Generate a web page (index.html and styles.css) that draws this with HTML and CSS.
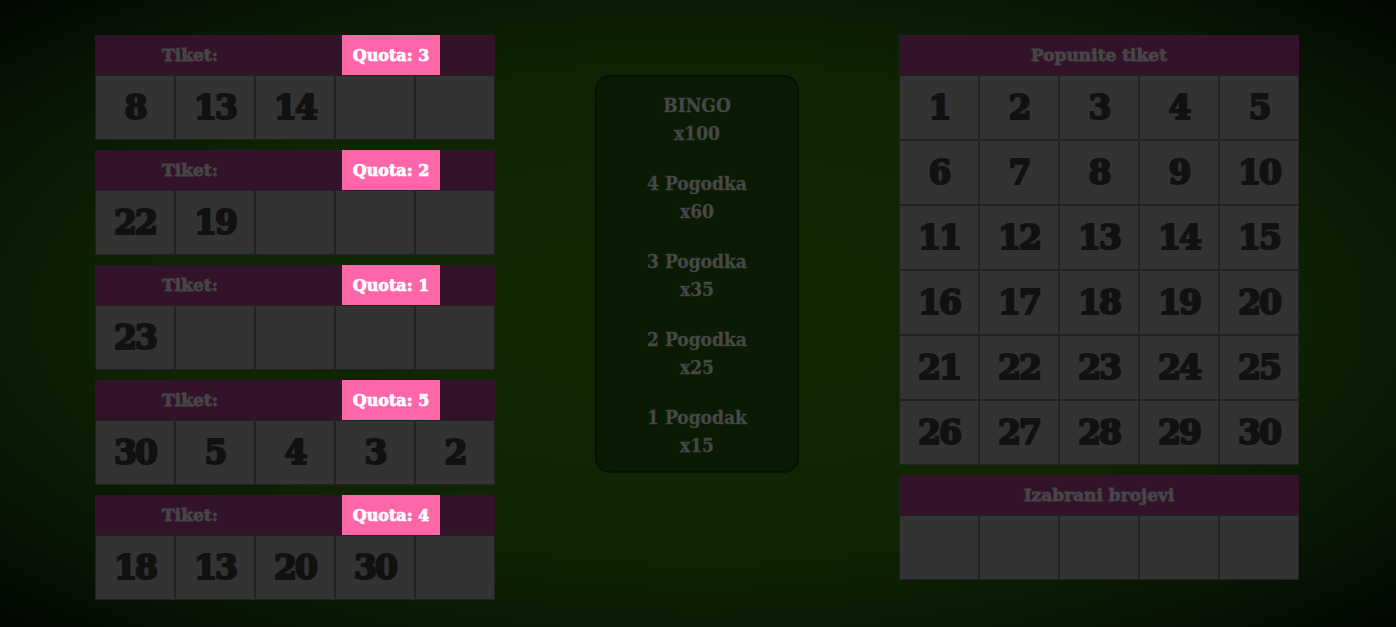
FILE: index.html
```html
<!DOCTYPE html>
<html lang="en">
<head>
    <meta charset="UTF-8">
    <meta name="viewport" content="width=device-width, initial-scale=1.0">
    <title>Bingo</title>
    <link rel="stylesheet" href="styles.css">
</head>
<body>
    <div class="game">
        <!-- Played tickets -->
        <div class="tickets">
            <div class="ticket">
                <div class="ticket-header">
                    <div class="ticket-half"><span class="ticket-title">Tiket:</span></div>
                    <div class="ticket-half"><span class="quota">Quota: 3</span></div>
                </div>
                <div class="row">
                    <div class="cell">8</div>
                    <div class="cell">13</div>
                    <div class="cell">14</div>
                    <div class="cell"></div>
                    <div class="cell"></div>
                </div>
            </div>
            <div class="ticket">
                <div class="ticket-header">
                    <div class="ticket-half"><span class="ticket-title">Tiket:</span></div>
                    <div class="ticket-half"><span class="quota">Quota: 2</span></div>
                </div>
                <div class="row">
                    <div class="cell">22</div>
                    <div class="cell">19</div>
                    <div class="cell"></div>
                    <div class="cell"></div>
                    <div class="cell"></div>
                </div>
            </div>
            <div class="ticket">
                <div class="ticket-header">
                    <div class="ticket-half"><span class="ticket-title">Tiket:</span></div>
                    <div class="ticket-half"><span class="quota">Quota: 1</span></div>
                </div>
                <div class="row">
                    <div class="cell">23</div>
                    <div class="cell"></div>
                    <div class="cell"></div>
                    <div class="cell"></div>
                    <div class="cell"></div>
                </div>
            </div>
            <div class="ticket">
                <div class="ticket-header">
                    <div class="ticket-half"><span class="ticket-title">Tiket:</span></div>
                    <div class="ticket-half"><span class="quota">Quota: 5</span></div>
                </div>
                <div class="row">
                    <div class="cell">30</div>
                    <div class="cell">5</div>
                    <div class="cell">4</div>
                    <div class="cell">3</div>
                    <div class="cell">2</div>
                </div>
            </div>
            <div class="ticket">
                <div class="ticket-header">
                    <div class="ticket-half"><span class="ticket-title">Tiket:</span></div>
                    <div class="ticket-half"><span class="quota">Quota: 4</span></div>
                </div>
                <div class="row">
                    <div class="cell">18</div>
                    <div class="cell">13</div>
                    <div class="cell">20</div>
                    <div class="cell">30</div>
                    <div class="cell"></div>
                </div>
            </div>
        </div>

        <!-- Payout table -->
        <div class="payouts">
            <div class="payout">BINGO<br>x100</div>
            <div class="payout">4 Pogodka<br>x60</div>
            <div class="payout">3 Pogodka<br>x35</div>
            <div class="payout">2 Pogodka<br>x25</div>
            <div class="payout">1 Pogodak<br>x15</div>
        </div>

        <!-- Number picker -->
        <div class="picker">
            <div class="ticket">
                <div class="panel-header">Popunite tiket</div>
                <div class="board" id="board"></div>
            </div>
            <div class="ticket">
                <div class="panel-header">Izabrani brojevi</div>
                <div class="row">
                    <div class="cell"></div>
                    <div class="cell"></div>
                    <div class="cell"></div>
                    <div class="cell"></div>
                    <div class="cell"></div>
                </div>
            </div>
        </div>
    </div>

    <script>
        // Fill the 1-30 board
        const board = document.getElementById('board');
        for (let i = 1; i <= 30; i++) {
            const cell = document.createElement('div');
            cell.classList.add('cell');
            cell.textContent = i;
            board.appendChild(cell);
        }
    </script>
</body>
</html>
```

FILE: styles.css
```css
html, body {
    height: 100%;
}

body {
    margin: 0;
    padding: 0;
    font-family: 'DejaVu Serif', serif;
    background: radial-gradient(ellipse farthest-corner at center, #112804 0%, #0e2403 55%, #081604 80%, #020802 100%);
    overflow: hidden;
}

.game {
    display: flex;
    justify-content: center;
    align-items: flex-start;
    gap: 100px;
    padding: 35px 2px 0 0;
}

.tickets,
.picker {
    display: flex;
    flex-direction: column;
    gap: 10px;
    width: 400px;
}

.ticket {
    display: flex;
    flex-direction: column;
}

.ticket-header,
.panel-header {
    height: 40px;
    background-color: #33132a;
    display: flex;
    align-items: center;
}

.ticket-half {
    width: 190px;
    flex-shrink: 0;
    height: 100%;
    display: flex;
    justify-content: center;
    align-items: center;
}

.ticket-half:last-child {
    width: auto;
    flex: 1;
    justify-content: flex-start;
    padding-left: 57px;
}

.ticket-title,
.panel-header {
    color: #464646;
    font-weight: bold;
    font-size: 17px;
    -webkit-text-stroke: 0.8px #464646;
}

.panel-header {
    justify-content: center;
}

.quota {
    height: 40px;
    width: 98px;
    display: flex;
    justify-content: center;
    align-items: center;
    background-color: #ff66aa;
    color: white;
    font-weight: bold;
    font-size: 16px;
    -webkit-text-stroke: 0.7px white;
}

.row,
.board {
    display: grid;
    grid-template-columns: repeat(5, 80px);
}

.cell {
    box-sizing: border-box;
    height: 65px;
    background-color: #333;
    border: 1px solid #222;
    display: flex;
    justify-content: center;
    align-items: center;
    font-family: 'DejaVu Serif', serif;
    font-weight: bold;
    font-size: 33px;
    color: #111;
    -webkit-text-stroke: 2.2px #111;
    letter-spacing: -2px;
}

.payouts {
    margin-top: 40px;
    width: 204px;
    box-sizing: border-box;
    padding: 14px 0 12px;
    background-color: #0a1a03;
    border: 2px solid #061202;
    border-radius: 15px;
    display: flex;
    flex-direction: column;
    gap: 22px;
}

.payout {
    text-align: center;
    color: #474747;
    font-family: 'DejaVu Serif Condensed', 'DejaVu Serif', serif;
    font-weight: bold;
    font-size: 19px;
    line-height: 28px;
    -webkit-text-stroke: 0.3px #474747;
}
```
